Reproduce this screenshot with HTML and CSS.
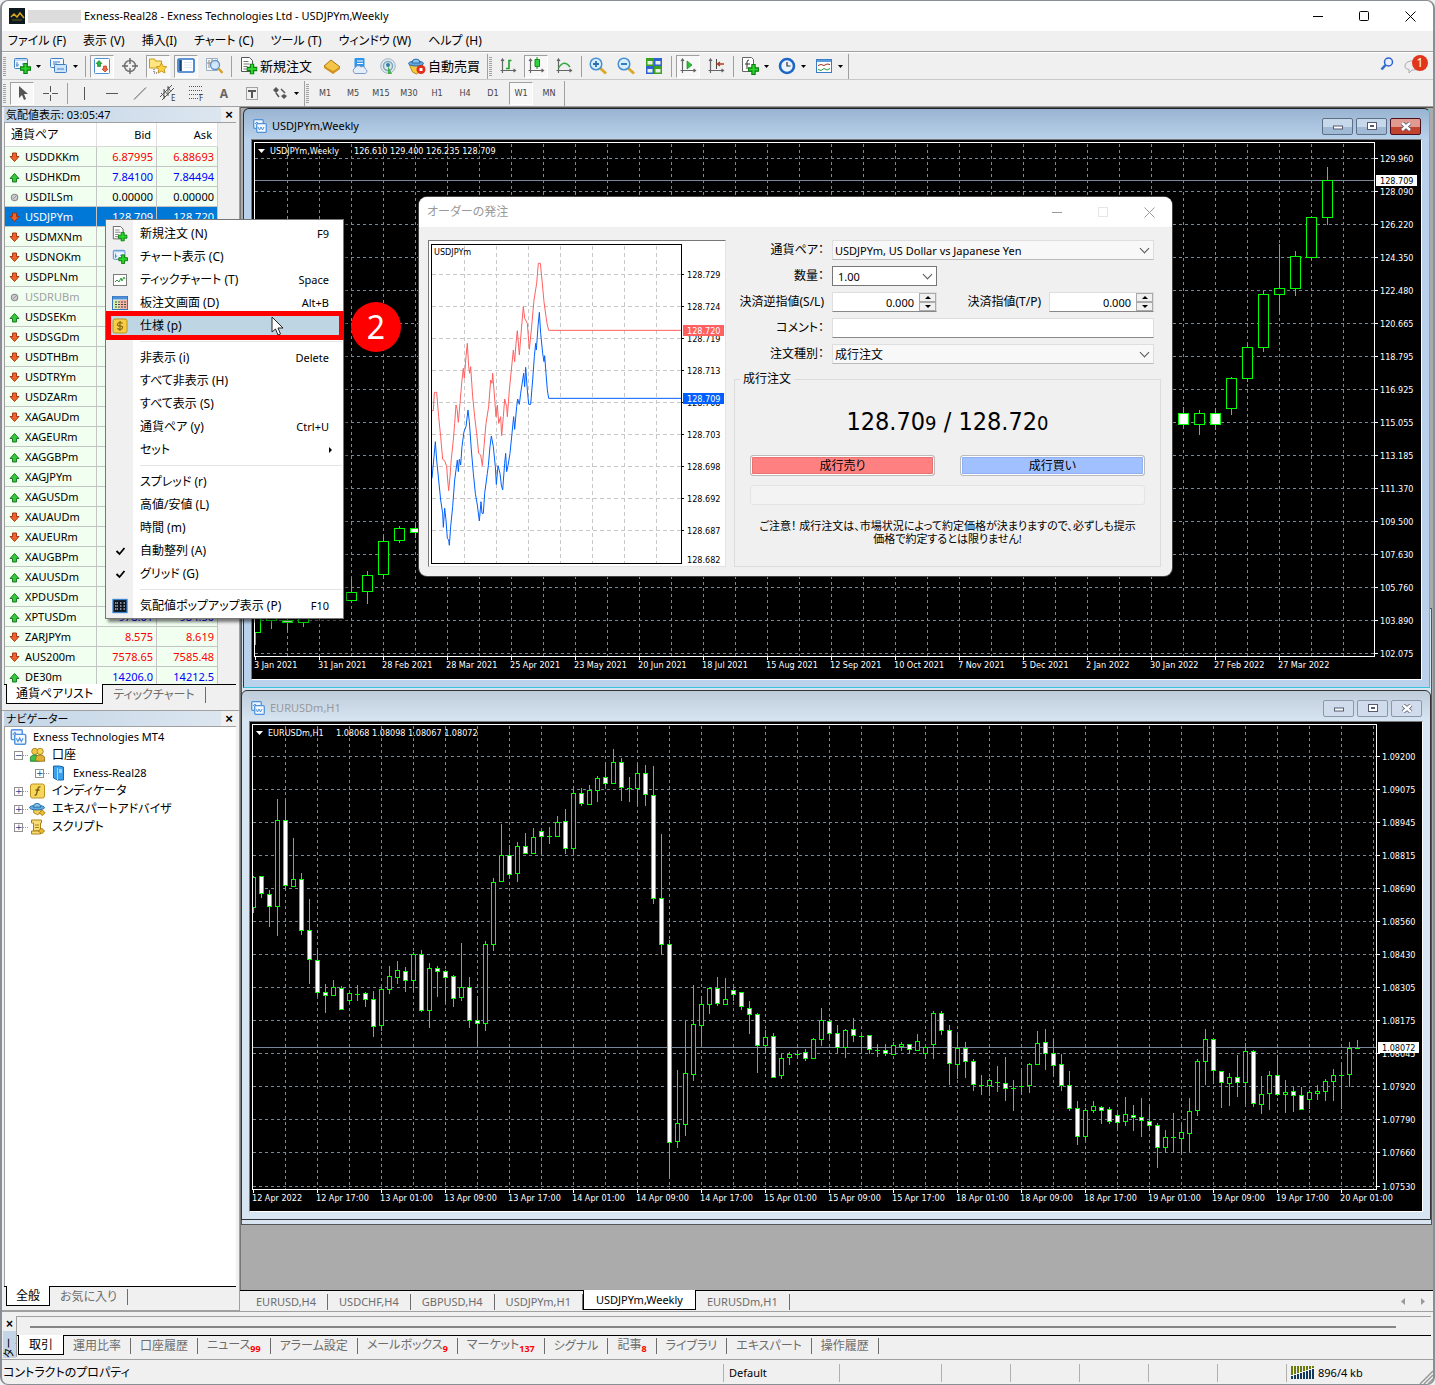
FILE: index.html
```html
<!DOCTYPE html>
<html lang="ja">
<head>
<meta charset="utf-8">
<meta name="viewport" content="width=device-width, initial-scale=1">
<title>Exness-Real28 - Exness Technologies Ltd - USDJPYm,Weekly</title>
<link rel="stylesheet" href="styles.css">
</head>
<body>
<svg class="sprite" aria-hidden="true">
  <symbol id="plus" viewBox="0 0 10 10"><path d="M3.500.5h3v3h3v3h-3v3h-3v-3h-3v-3h3z" fill="#2bd32b" stroke="#0a7d10"/></symbol>
  <symbol id="i-newchart" viewBox="0 0 18 18"><rect x="1.500" y="1.500" width="13" height="10" rx="1" fill="#eef6ff" stroke="#3f7fc4"/><path d="M2 3h12" stroke="#8cbcec"/><path d="M4 5v5M3 8h3M9 7h4" stroke="#4d86c4"/><use href="#plus" x="7" y="6" width="11" height="11"/></symbol>
  <symbol id="i-profiles" viewBox="0 0 18 18"><rect x=".5" y="1.500" width="13" height="9" rx="1" fill="#eef6ff" stroke="#3f7fc4"/><path d="M3 5h7M3 7h4" stroke="#3f7fc4"/><rect x="4.500" y="7.500" width="12" height="8" rx="1" fill="#cfe4fa" stroke="#3f7fc4"/><path d="M7 12h7" stroke="#3f7fc4"/></symbol>
  <symbol id="i-watch" viewBox="0 0 18 18"><rect x="1.500" y="1.500" width="15" height="15" rx="1" fill="#fff" stroke="#4a90d9"/><path d="M6 3.500l3 3H7.500v3h-3v-3H3z" fill="#26b33a" stroke="#0f7a20" stroke-width=".6"/><path d="M12 15l-3-3h1.500V9h3v3H15z" fill="#f26a3d" stroke="#b5260b" stroke-width=".6"/></symbol>
  <symbol id="i-target" viewBox="0 0 18 18"><circle cx="9" cy="9" r="5.500" fill="none" stroke="#777" stroke-width="1.500"/><path d="M9 1v6M9 11v6M1 9h6M11 9h6" stroke="#666" stroke-width="1.400"/></symbol>
  <symbol id="i-folderstar" viewBox="0 0 18 18"><path d="M.5 3V2h5l1 2h6v7H.5z" fill="#ffe680" stroke="#c69a18"/><path d="M5 12v4h3" fill="none" stroke="#444" stroke-dasharray="1 1"/><path d="M12.500 6l1.700 3.400 3.600.4-2.600 2.500.7 3.700-3.400-1.800L9.100 16l.7-3.700-2.600-2.500 3.600-.4z" fill="#ffd23e" stroke="#b98510" stroke-width=".8"/></symbol>
  <symbol id="i-terminal" viewBox="0 0 18 18"><rect x="1" y="2" width="16" height="13" rx="1" fill="#fff" stroke="#2b73c9" stroke-width="1.600"/><path d="M3.500 3v11" stroke="#17406f" stroke-width="2.600"/><path d="M7 5.500h8M7 8h8M7 10.500h8" stroke="#dfe8f2"/></symbol>
  <symbol id="i-tester" viewBox="0 0 18 18"><path d="M1.500 1.500h11v12h-11z" fill="#f4f8fc" stroke="#9bb0c6"/><path d="M4 3v8M7 2v9M2 6h9" stroke="#a08d76"/><circle cx="10" cy="8" r="4.500" fill="#cfe6fb" fill-opacity=".85" stroke="#5f93c4" stroke-width="1.300"/><path d="M13.500 11.500l4 4.500" stroke="#d99e20" stroke-width="2.400"/></symbol>
  <symbol id="i-order" viewBox="0 0 18 18"><path d="M1.500.5h8l3 3v11h-11z" fill="#fff" stroke="#555"/><path d="M3.500 4.500h5M3.500 7h6M3.500 9.500h4M3.500 12h4" stroke="#777"/><use href="#plus" x="6.500" y="6.500" width="11" height="11"/></symbol>
  <symbol id="i-book" viewBox="0 0 18 18"><path d="M1 9l7-6 9 7-7 6z" fill="#f5c548" stroke="#a8740f"/><path d="M1 9l9 5 7-4v2l-7 5-9-6z" fill="#d49320"/></symbol>
  <symbol id="i-cloud" viewBox="0 0 18 18"><rect x="3.500" y="1" width="10" height="10" rx="1" fill="#2f95e8"/><path d="M6 4h6M6 6.500h6" stroke="#fff" stroke-width="1.200"/><path d="M4 16.500a3 3 0 0 1 0-5.500 3.500 3.500 0 0 1 6-1 3 3 0 0 1 4.500 2 2.500 2.500 0 0 1 0 4.500z" fill="#e4eefa" stroke="#7d9cc4"/></symbol>
  <symbol id="i-signal" viewBox="0 0 18 18"><circle cx="9" cy="9" r="7.300" fill="#dfe7ee" stroke="#a3b5c4"/><circle cx="9" cy="9" r="4.500" fill="none" stroke="#79a7b9" stroke-width="1.400"/><circle cx="9" cy="8" r="2" fill="#2f7fa8"/><path d="M9 9l4 8H9z" fill="#46b04b"/></symbol>
  <symbol id="i-auto" viewBox="0 0 18 18"><path d="M1.500 8h13l-2 6-4 3-4-2z" fill="#f4c93f" stroke="#b58a18"/><ellipse cx="8" cy="6.500" rx="7.500" ry="2.500" fill="#62a8de" stroke="#2c6ca5"/><path d="M4 6a4 4 0 0 1 8 0z" fill="#8dc4ef" stroke="#2c6ca5"/><circle cx="13" cy="12.500" r="4.500" fill="#e2301e"/><path d="M11.500 11h3v3h-3z" fill="#fff"/></symbol>
  <symbol id="axes" viewBox="0 0 18 18"><path d="M3.500 2v14M1.500 13.500h15M2 4l1.500-2L5 4M14.500 12l2 1.500-2 1.500" fill="none" stroke="#666" stroke-width="1.200"/></symbol>
  <symbol id="i-bars" viewBox="0 0 18 18"><use href="#axes"/><path d="M7 11.500h3V3.500h2.500" fill="none" stroke="#1ea32b" stroke-width="1.600"/></symbol>
  <symbol id="i-candles" viewBox="0 0 18 18"><use href="#axes"/><path d="M10 0v12" stroke="#128a1e"/><path d="M8 2.500h4.500v7H8z" fill="#2fd33c" stroke="#128a1e"/></symbol>
  <symbol id="i-line" viewBox="0 0 18 18"><use href="#axes"/><path d="M3.500 11Q9 2 15 10" fill="none" stroke="#34a83e" stroke-width="1.400"/></symbol>
  <symbol id="lens" viewBox="0 0 18 18"><path d="M11 11l6 5.500" stroke="#d9a825" stroke-width="3"/><circle cx="7" cy="7" r="5.800" fill="#d6efff" stroke="#4a8fd0" stroke-width="1.500"/></symbol>
  <symbol id="i-zoomin" viewBox="0 0 18 18"><use href="#lens"/><path d="M4 7h6M7 4v6" stroke="#2b6fb0" stroke-width="1.800"/></symbol>
  <symbol id="i-zoomout" viewBox="0 0 18 18"><use href="#lens"/><path d="M4 7h6" stroke="#2b6fb0" stroke-width="1.800"/></symbol>
  <symbol id="i-tile" viewBox="0 0 18 18"><path d="M1 1h8v8H1zM9 9h8v8H9z" fill="#3aa21e"/><path d="M9 1h8v8H9zM1 9h8v8H1z" fill="#2d62d0"/><path d="M2.500 4h5v3.500h-5zM10.500 4h5v3.500h-5zM2.500 12h5v3.500h-5zM10.500 12h5v3.500h-5z" fill="#e8f2e4"/></symbol>
  <symbol id="i-scroll" viewBox="0 0 18 18"><use href="#axes"/><path d="M8 4l5 4-5 4z" fill="#2fbf3a" stroke="#128a1e" stroke-width=".7"/></symbol>
  <symbol id="i-shift" viewBox="0 0 18 18"><use href="#axes"/><path d="M9.500 2v10" stroke="#444"/><path d="M17 7h-6M13 5l-2.500 2L13 9" fill="none" stroke="#b33a1e" stroke-width="1.500"/></symbol>
  <symbol id="i-indic" viewBox="0 0 18 18"><path d="M1.500.5h9l2 2v12h-11z" fill="#fff" stroke="#666"/><path d="M8 3q-2 0-2 2v7M4 7h5" fill="none" stroke="#333"/><use href="#plus" x="7" y="7" width="11" height="11"/></symbol>
  <symbol id="i-clock" viewBox="0 0 18 18"><circle cx="9" cy="9" r="7" fill="#eaf4ff" stroke="#1f66c4" stroke-width="2.600"/><path d="M9 5v4h3.500" fill="none" stroke="#333" stroke-width="1.200"/></symbol>
  <symbol id="i-template" viewBox="0 0 18 18"><rect x="1.500" y="2.500" width="15" height="13" fill="#fff" stroke="#3b7cc2"/><path d="M2 4h14" stroke="#5d9be0" stroke-width="2"/><path d="M3 8.500l3-1 3 1 3-1.500 3 .5" fill="none" stroke="#a03020"/><path d="M3 12.500l3 1 3-2 3 1.500 3-1.500" fill="none" stroke="#2b9a3a"/></symbol>
  <symbol id="i-search" viewBox="0 0 14 14"><circle cx="8.500" cy="5" r="4" fill="#e8f0ff" stroke="#2f62d0" stroke-width="1.500"/><path d="M5.500 8L1.500 12.500" stroke="#2f6fc4" stroke-width="2.600"/></symbol>
  <symbol id="i-chart" viewBox="0 0 14 14"><rect x=".7" y=".7" width="9.600" height="8.600" rx="1" fill="#eaf3ff" stroke="#4f93dd" stroke-width="1.300"/><path d="M2 5l2-2 1 2" fill="none" stroke="#4f93dd"/><rect x="3.700" y="4.700" width="9.600" height="8.600" rx="1" fill="#f4f9ff" stroke="#4f93dd" stroke-width="1.300"/><path d="M5 8l1.500 3L8 8l1.500 3L11 8" fill="none" stroke="#4f93dd"/></symbol>
  <symbol id="i-down" viewBox="0 0 11 11"><path d="M3.500 1h4v3.500H10L5.500 9.500 1 4.500h2.500z" fill="#f0642c" stroke="#9c2c0c" stroke-width=".9"/></symbol>
  <symbol id="i-up" viewBox="0 0 11 11"><path d="M3.500 10h4V6.500H10L5.500 1.500 1 6.500h2.500z" fill="#35c93c" stroke="#11701a" stroke-width=".9"/></symbol>
  <symbol id="i-flat" viewBox="0 0 11 11"><circle cx="5.500" cy="5.500" r="3.200" fill="#ccc" stroke="#8a8a8a" stroke-width="1.100"/><path d="M4 7l3-3" stroke="#999"/></symbol>
  <symbol id="caret" viewBox="0 0 5 3"><path d="M0 0h5L2.500 3z"/></symbol>
  <symbol id="i-users" viewBox="0 0 18 18"><circle cx="6" cy="5" r="3.500" fill="#f2c848" stroke="#a77d14"/><path d="M1 16v-3q0-4 5-4t5 4v3z" fill="#3fc04a" stroke="#1b7c26"/><circle cx="12" cy="5" r="3.500" fill="#f7d65a" stroke="#a77d14"/><path d="M7 15v-2q0-4 5-4t5 4v3H9z" fill="#e0b036" stroke="#967010"/></symbol>
  <symbol id="i-server" viewBox="0 0 14 16"><path d="M2 1h6l4 1v13H6l-4-2z" fill="#3ba1ee" stroke="#1768ad"/><path d="M6 3v12" stroke="#9ad4ff"/><path d="M7.500 5h3M7.500 7h3" stroke="#fff"/></symbol>
  <symbol id="i-func" viewBox="0 0 16 16"><rect x="1" y="1" width="14" height="14" rx="2" fill="#f6d75b" stroke="#bd9320"/><path d="M11 4q-2-.6-2.500 1.500L7 11q-.5 1.500-2 1M6 7h4" fill="none" stroke="#7a5a0c" stroke-width="1.300"/></symbol>
  <symbol id="i-hat" viewBox="0 0 18 16"><path d="M5 8h8v4l-4 2-4-2z" fill="#f3cf58" stroke="#ad8314"/><ellipse cx="8.500" cy="6.500" rx="8" ry="2.500" fill="#5fabdf" stroke="#2c70a5"/><path d="M4.500 6a4 4 0 0 1 8 0z" fill="#85c4ee" stroke="#2c70a5"/><path d="M14 9l3 3-3 3-3-3z" fill="#edb92f" stroke="#a1780c"/></symbol>
  <symbol id="i-script" viewBox="0 0 16 16"><path d="M2 1h10v3h-1v8h-7V4H2z" fill="#f6dd7a" stroke="#ad8314"/><path d="M2 12h9v3H2zM5.500 6h4M5.500 8.500h4" fill="#f6dd7a" stroke="#ad8314"/><path d="M12 9l3 3-3 3-3-3z" fill="#edb92f" stroke="#a1780c"/></symbol>
  <symbol id="i-tick" viewBox="0 0 16 16"><rect x="1.500" y="2.500" width="13" height="11" fill="#fff" stroke="#7d7d7d"/><path d="M3 10l2-2 2 2 2-4 1 3 2-4 1 2" fill="none" stroke="#2a9b36"/></symbol>
  <symbol id="i-depth" viewBox="0 0 16 16"><rect x=".5" y="1.500" width="15" height="13" fill="#fff" stroke="#3474b8"/><path d="M1 3h14" stroke="#4d8ed8" stroke-width="3"/><path d="M1 5h7v9H1z" fill="#d9efa8"/><path d="M8 5h7v9H8z" fill="#f7b6a8"/><path d="M3 7h11M3 9.500h11M3 12h11" stroke="#444" stroke-dasharray="2 1"/></symbol>
  <symbol id="i-spec" viewBox="0 0 16 16"><rect x="1" y="1" width="14" height="14" rx="2" fill="#f6cf45" stroke="#c0921c"/><path d="M10.500 5.500Q10 4.500 8 4.500T5.500 6.200 8 8t2.500 1.800T8 11.500 5.500 10.300M8 3v10" fill="none" stroke="#8a6410" stroke-width="1.200"/></symbol>
  <symbol id="i-popup" viewBox="0 0 16 16"><rect x="1" y="1.500" width="14" height="13" fill="#0c1420" stroke="#3a83cf" stroke-width="1.300"/><path d="M3 5h3M3 8h3M3 11h3M8 5h2M8 8h2M8 11h2M11.500 5h2M11.500 8h2M11.500 11h2" stroke="#fff" stroke-dasharray="1.500 .5"/></symbol>
  <symbol id="i-check" viewBox="0 0 16 16"><path d="M4.500 8l3 3 5-6" fill="none" stroke="#000" stroke-width="1.800"/></symbol>
</svg>

<div class="app">
  <header class="titlebar">
    <svg class="logo" viewBox="0 0 16 16"><rect width="16" height="16" fill="#0c1a20"/><path d="M2 9l3-3 3 3 3-4 4 5" fill="none" stroke="#d8a51c" stroke-width="1.500"/><path d="M3 12h10" stroke="#6f5a1c"/></svg>
    <span class="mask"></span>
    <h1>Exness-Real28 - Exness Technologies Ltd - USDJPYm,Weekly</h1>
    <div class="win-ctl">
      <button aria-label="最小化"><svg viewBox="0 0 11 11"><path d="M0 5.500h10"/></svg></button>
      <button aria-label="最大化"><svg viewBox="0 0 11 11"><rect x=".5" y=".5" width="9" height="9" rx="1"/></svg></button>
      <button aria-label="閉じる"><svg viewBox="0 0 11 11"><path d="M.5.5l10 10M10.500.5l-10 10"/></svg></button>
    </div>
  </header>

  <nav class="menubar">
    <button>ファイル (F)</button><button>表示 (V)</button><button>挿入(I)</button><button>チャート (C)</button><button>ツール (T)</button><button>ウィンドウ (W)</button><button>ヘルプ (H)</button>
  </nav>

  <div class="toolbar">
    <i class="grip"></i>
    <button class="tb drop" aria-label="新規チャート"><svg class="ic"><use href="#i-newchart"/></svg><svg class="car"><use href="#caret"/></svg></button>
    <button class="tb drop" aria-label="プロファイル"><svg class="ic"><use href="#i-profiles"/></svg><svg class="car"><use href="#caret"/></svg></button>
    <i class="sep"></i>
    <button class="tb on" aria-label="気配値表示"><svg class="ic"><use href="#i-watch"/></svg></button>
    <button class="tb" aria-label="データウィンドウ"><svg class="ic"><use href="#i-target"/></svg></button>
    <button class="tb on" aria-label="ナビゲーター"><svg class="ic"><use href="#i-folderstar"/></svg></button>
    <button class="tb on" aria-label="ターミナル"><svg class="ic"><use href="#i-terminal"/></svg></button>
    <button class="tb" aria-label="ストラテジーテスター"><svg class="ic"><use href="#i-tester"/></svg></button>
    <i class="sep"></i>
    <button class="tb wide"><svg class="ic"><use href="#i-order"/></svg>新規注文</button>
    <button class="tb" aria-label="MetaEditor"><svg class="ic"><use href="#i-book"/></svg></button>
    <button class="tb" aria-label="VPS"><svg class="ic"><use href="#i-cloud"/></svg></button>
    <button class="tb" aria-label="シグナル"><svg class="ic"><use href="#i-signal"/></svg></button>
    <button class="tb wide"><svg class="ic"><use href="#i-auto"/></svg>自動売買</button>
    <i class="edge"></i><i class="grip"></i>
    <button class="tb" aria-label="バーチャート"><svg class="ic"><use href="#i-bars"/></svg></button>
    <button class="tb on" aria-label="ローソク足"><svg class="ic"><use href="#i-candles"/></svg></button>
    <button class="tb" aria-label="ラインチャート"><svg class="ic"><use href="#i-line"/></svg></button>
    <i class="sep"></i>
    <button class="tb" aria-label="拡大"><svg class="ic"><use href="#i-zoomin"/></svg></button>
    <button class="tb" aria-label="縮小"><svg class="ic"><use href="#i-zoomout"/></svg></button>
    <button class="tb" aria-label="整列"><svg class="ic"><use href="#i-tile"/></svg></button>
    <i class="sep"></i>
    <button class="tb on" aria-label="自動スクロール"><svg class="ic"><use href="#i-scroll"/></svg></button>
    <button class="tb" aria-label="チャートシフト"><svg class="ic"><use href="#i-shift"/></svg></button>
    <i class="sep"></i>
    <button class="tb drop" aria-label="インディケータ"><svg class="ic"><use href="#i-indic"/></svg><svg class="car"><use href="#caret"/></svg></button>
    <button class="tb drop" aria-label="時間足"><svg class="ic"><use href="#i-clock"/></svg><svg class="car"><use href="#caret"/></svg></button>
    <button class="tb drop" aria-label="定型チャート"><svg class="ic"><use href="#i-template"/></svg><svg class="car"><use href="#caret"/></svg></button>
    <i class="edge"></i>
    <div class="alerts">
      <button aria-label="検索"><svg width="14" height="14"><use href="#i-search"/></svg></button>
      <button class="chat" aria-label="通知"><svg width="16" height="14" viewBox="0 0 16 14"><path d="M8 1c4 0 7 2 7 5s-3 4-7 4l-3 3V9.500C2 9 1 8 1 6c0-3 3-5 7-5z" fill="#eee" stroke="#aaa"/></svg><b>1</b></button>
    </div>
  </div>

  <div class="toolbar tools">
    <i class="grip"></i>
    <button class="tb on" aria-label="カーソル"><svg class="ic" viewBox="0 0 18 18"><path d="M6 2v12l3-3 2 5 2-1-2-5h4z" fill="#555"/></svg></button>
    <button class="tb" aria-label="十字カーソル"><svg class="ic" viewBox="0 0 18 18"><path d="M9.500 2v6M9.500 11v6M2 9.500h6M11 9.500h6" stroke="#555"/></svg></button>
    <i class="sep"></i>
    <button class="tb" aria-label="垂直線"><svg class="ic" viewBox="0 0 18 18"><path d="M9.500 3v13" stroke="#555"/></svg></button>
    <button class="tb" aria-label="水平線"><svg class="ic" viewBox="0 0 18 18"><path d="M3 9.500h12" stroke="#555"/></svg></button>
    <button class="tb" aria-label="トレンドライン"><svg class="ic" viewBox="0 0 18 18"><path d="M3 15.500L15 3.500" stroke="#555"/></svg></button>
    <button class="tb" aria-label="チャネル"><svg class="ic" viewBox="0 0 18 18"><path d="M1 13L13 1M3 16L15 4M2 9l4 4M5 6l4 5M9 3l3 5M5 5v10M9 2v10" fill="none" stroke="#555"/><text x="12" y="17" class="mini">E</text></svg></button>
    <button class="tb" aria-label="フィボナッチ"><svg class="ic" viewBox="0 0 18 18"><path d="M2 2.500h14M2 6.500h14M2 10.500h14M2 14.500h9" stroke="#555" stroke-dasharray="1 1"/><text x="12" y="17" class="mini">F</text></svg></button>
    <button class="tb glyph" aria-label="テキスト"><span>A</span></button>
    <button class="tb" aria-label="テキストラベル"><svg class="ic" viewBox="0 0 18 18"><rect x="3.500" y="3.500" width="11" height="12" fill="none" stroke="#555" stroke-dasharray="1 1"/><path d="M5 7h8M9 7v7" stroke="#555" stroke-width="2"/></svg></button>
    <button class="tb drop" aria-label="矢印"><svg class="ic" viewBox="0 0 18 18"><path d="M2 6l3-3 3 3-3 3zM10 12l3-2 3 2-3 3z" fill="#555"/><path d="M5 9l3 4M10 5l4 4" stroke="#555" stroke-width="1.500"/></svg><svg class="car"><use href="#caret"/></svg></button>
    <i class="edge"></i><i class="grip"></i>
    <button class="tb tf">M1</button><button class="tb tf">M5</button><button class="tb tf">M15</button><button class="tb tf">M30</button><button class="tb tf">H1</button><button class="tb tf">H4</button><button class="tb tf">D1</button><button class="tb tf on">W1</button><button class="tb tf">MN</button>
    <i class="edge"></i>
  </div>

  <div class="main">
    <aside class="side">
      <section class="panel watch">
        <header class="dock-title"><h2>気配値表示: 03:05:47</h2><button aria-label="閉じる">×</button></header>
        <div class="watch-body">
          <table>
            <thead><tr><th>通貨ペア</th><th>Bid</th><th>Ask</th></tr></thead>
            <tbody>
              <tr class="dn"><td><svg><use href="#i-down"/></svg>USDDKKm</td><td>6.87995</td><td>6.88693</td></tr>
              <tr class="up"><td><svg><use href="#i-up"/></svg>USDHKDm</td><td>7.84100</td><td>7.84494</td></tr>
              <tr><td><svg><use href="#i-flat"/></svg>USDILSm</td><td>0.00000</td><td>0.00000</td></tr>
              <tr class="sel"><td><svg><use href="#i-down"/></svg>USDJPYm</td><td>128.709</td><td>128.720</td></tr>
              <tr class="dn"><td><svg><use href="#i-down"/></svg>USDMXNm</td><td></td><td></td></tr>
              <tr class="dn"><td><svg><use href="#i-down"/></svg>USDNOKm</td><td></td><td></td></tr>
              <tr class="dn"><td><svg><use href="#i-down"/></svg>USDPLNm</td><td></td><td></td></tr>
              <tr class="off"><td><svg><use href="#i-flat"/></svg>USDRUBm</td><td></td><td></td></tr>
              <tr class="up"><td><svg><use href="#i-up"/></svg>USDSEKm</td><td></td><td></td></tr>
              <tr class="dn"><td><svg><use href="#i-down"/></svg>USDSGDm</td><td></td><td></td></tr>
              <tr class="dn"><td><svg><use href="#i-down"/></svg>USDTHBm</td><td></td><td></td></tr>
              <tr class="dn"><td><svg><use href="#i-down"/></svg>USDTRYm</td><td></td><td></td></tr>
              <tr class="dn"><td><svg><use href="#i-down"/></svg>USDZARm</td><td></td><td></td></tr>
              <tr class="dn"><td><svg><use href="#i-down"/></svg>XAGAUDm</td><td></td><td></td></tr>
              <tr class="up"><td><svg><use href="#i-up"/></svg>XAGEURm</td><td></td><td></td></tr>
              <tr class="up"><td><svg><use href="#i-up"/></svg>XAGGBPm</td><td></td><td></td></tr>
              <tr class="up"><td><svg><use href="#i-up"/></svg>XAGJPYm</td><td></td><td></td></tr>
              <tr class="up"><td><svg><use href="#i-up"/></svg>XAGUSDm</td><td></td><td></td></tr>
              <tr class="dn"><td><svg><use href="#i-down"/></svg>XAUAUDm</td><td></td><td></td></tr>
              <tr class="dn"><td><svg><use href="#i-down"/></svg>XAUEURm</td><td></td><td></td></tr>
              <tr class="up"><td><svg><use href="#i-up"/></svg>XAUGBPm</td><td></td><td></td></tr>
              <tr class="up"><td><svg><use href="#i-up"/></svg>XAUUSDm</td><td></td><td></td></tr>
              <tr class="up"><td><svg><use href="#i-up"/></svg>XPDUSDm</td><td></td><td></td></tr>
              <tr class="up"><td><svg><use href="#i-up"/></svg>XPTUSDm</td><td>978.01</td><td>984.50</td></tr>
              <tr class="dn"><td><svg><use href="#i-down"/></svg>ZARJPYm</td><td>8.575</td><td>8.619</td></tr>
              <tr class="dn"><td><svg><use href="#i-down"/></svg>AUS200m</td><td>7578.65</td><td>7585.48</td></tr>
              <tr class="up"><td><svg><use href="#i-up"/></svg>DE30m</td><td>14206.0</td><td>14212.5</td></tr>
            </tbody>
          </table>
        </div>
        <div class="tabs"><button class="tab cur">通貨ペアリスト</button><button class="tab">ティックチャート</button></div>
      </section>

      <section class="panel nav">
        <header class="dock-title"><h2>ナビゲーター</h2><button aria-label="閉じる">×</button></header>
        <ul class="tree">
          <li class="root"><svg><use href="#i-chart"/></svg>Exness Technologies MT4</li>
          <li class="node jp"><i class="box">−</i><svg><use href="#i-users"/></svg>口座</li>
          <li class="node leaf"><i class="box">+</i><svg><use href="#i-server"/></svg>Exness-Real28</li>
          <li class="node jp"><i class="box">+</i><svg><use href="#i-func"/></svg>インディケータ</li>
          <li class="node jp"><i class="box">+</i><svg><use href="#i-hat"/></svg>エキスパートアドバイザ</li>
          <li class="node jp"><i class="box">+</i><svg><use href="#i-script"/></svg>スクリプト</li>
        </ul>
        <div class="tabs"><button class="tab cur">全般</button><button class="tab">お気に入り</button></div>
      </section>
    </aside>

    <main class="work">
      <div class="desktop">
        <div class="under"></div>
        <section class="mdi front">
          <header><svg class="wi"><use href="#i-chart"/></svg><h2>USDJPYm,Weekly</h2>
            <div class="mc"><button aria-label="最小化"><svg viewBox="0 0 12 8"><rect x="1.500" y="3.500" width="9" height="3" fill="#fff" stroke="#555a70"/></svg></button><button aria-label="元に戻す"><svg viewBox="0 0 12 9"><rect x="1.500" y=".5" width="9" height="7" fill="#fff" stroke="#555a70"/><rect x="4.500" y="3.500" width="3" height="1" fill="#555a70" stroke="#555a70"/></svg></button><button class="x" aria-label="閉じる"><svg viewBox="0 0 12 9"><path d="M2 1l8 7M10 1L2 8" stroke="#555a70" stroke-width="4"/><path d="M2 1l8 7M10 1L2 8" stroke="#fff" stroke-width="2.400"/></svg></button></div>
          </header>
          <div class="client"><svg id="usdjpy" class="chart"></svg></div>
        </section>
        <section class="mdi back">
          <header><svg class="wi"><use href="#i-chart"/></svg><h2>EURUSDm,H1</h2>
            <div class="mc"><button aria-label="最小化"><svg viewBox="0 0 12 8"><rect x="1.500" y="3.500" width="9" height="3" fill="#fff" stroke="#555a70"/></svg></button><button aria-label="元に戻す"><svg viewBox="0 0 12 9"><rect x="1.500" y=".5" width="9" height="7" fill="#fff" stroke="#555a70"/><rect x="4.500" y="3.500" width="3" height="1" fill="#555a70" stroke="#555a70"/></svg></button><button aria-label="閉じる"><svg viewBox="0 0 12 9"><path d="M2 1l8 7M10 1L2 8" stroke="#555a70" stroke-width="4"/><path d="M2 1l8 7M10 1L2 8" stroke="#fff" stroke-width="2.400"/></svg></button></div>
          </header>
          <div class="client"><svg id="eurusd" class="chart"></svg></div>
        </section>
      </div>
      <div class="tabs charts">
        <button class="tab">EURUSD,H4</button><button class="tab">USDCHF,H4</button><button class="tab">GBPUSD,H4</button><button class="tab">USDJPYm,H1</button><button class="tab cur">USDJPYm,Weekly</button><button class="tab">EURUSDm,H1</button>
        <span class="scroll"><button aria-label="前へ"><svg width="4" height="7"><path d="M4 0v7L0 3.500z"/></svg></button><button aria-label="次へ"><svg width="4" height="7"><path d="M0 0v7l4-3.500z"/></svg></button></span>
      </div>
    </main>
  </div>

  <section class="terminal">
    <div class="strip"><button aria-label="閉じる">×</button><span><b>ターミナル</b></span></div>
    <div class="term-body">
      <div class="track"></div>
      <div class="tabs term-tabs">
        <button class="tab cur">取引</button><button class="tab">運用比率</button><button class="tab">口座履歴</button><button class="tab">ニュース<sub>99</sub></button><button class="tab">アラーム設定</button><button class="tab">メールボックス<sub>9</sub></button><button class="tab">マーケット<sub>137</sub></button><button class="tab">シグナル</button><button class="tab">記事<sub>8</sub></button><button class="tab">ライブラリ</button><button class="tab">エキスパート</button><button class="tab">操作履歴</button>
      </div>
    </div>
  </section>

  <footer class="status">
    <span class="jp">コントラクトのプロパティ</span><span>Default</span><span></span><span></span><span></span><span></span><span></span><span></span>
    <span class="net"><svg width="24" height="13" viewBox="0 0 24 13"><path d="M1 0v9M4 0v8M7 0v7M10 0v6M13 0v5M16 0v4M19 0v3M22 0v2" stroke="#6b7a0c" stroke-width="2"/><path d="M1 10v3M4 9v4M7 8v5M10 7v6M13 6v7M16 5v8M19 4v9M22 3v10" stroke="#123c5e" stroke-width="2"/></svg>896/4 kb</span>
    <svg class="size" viewBox="0 0 14 14"><path d="M1 14L14 1M5 14l9-9M9 14l5-5" stroke="#999" stroke-width="1.500"/></svg>
  </footer>
</div>

<section class="dialog" role="dialog" aria-labelledby="dlg">
  <header><h2 id="dlg">オーダーの発注</h2>
    <div class="win-ctl dim">
      <button aria-label="最小化"><svg viewBox="0 0 11 11"><path d="M0 5.500h10"/></svg></button>
      <button aria-label="最大化" disabled><svg viewBox="0 0 11 11"><rect x=".5" y=".5" width="9" height="9"/></svg></button>
      <button aria-label="閉じる"><svg viewBox="0 0 11 11"><path d="M.5.5l10 10M10.500.5l-10 10"/></svg></button>
    </div>
  </header>
  <div class="dlg-body">
    <div class="tickbox"><svg id="ticks" class="chart"></svg></div>
    <form class="order">
      <div class="grid">
        <label for="sym">通貨ペア：</label><span class="pick full"><select id="sym"><option>USDJPYm, US Dollar vs Japanese Yen</option></select></span>
        <label for="vol">数量：</label><span class="pick combo"><input id="vol" value="1.00"></span>
        <label for="sl">決済逆指値(S/L)</label><span class="spin"><input id="sl" value="0.000"><span><button type="button" aria-label="上へ"></button><button type="button" class="d" aria-label="下へ"></button></span></span>
        <label for="tp">決済指値(T/P)</label><span class="spin"><input id="tp" value="0.000"><span><button type="button" aria-label="上へ"></button><button type="button" class="d" aria-label="下へ"></button></span></span>
        <label for="com">コメント：</label><input id="com" class="full field">
        <label for="type">注文種別：</label><span class="pick full"><select id="type" class="jp"><option>成行注文</option></select></span>
      </div>
      <fieldset>
        <legend>成行注文</legend>
        <p class="quote">128.70<small>9</small> / 128.72<small>0</small></p>
        <div class="pair"><button type="button" class="sell">成行売り</button><button type="button" class="buy">成行買い</button></div>
        <div class="ghost"></div>
        <p class="note">ご注意！ 成行注文は、市場状況によって約定価格が決まりますので、必ずしも提示<br>価格で約定するとは限りません!</p>
      </fieldset>
    </form>
  </div>
</section>

<ul class="ctx">
  <li><button><svg><use href="#i-order"/></svg><span>新規注文 (N)</span><kbd>F9</kbd></button></li>
  <li><button><svg><use href="#i-newchart"/></svg><span>チャート表示 (C)</span></button></li>
  <li><button><svg><use href="#i-tick"/></svg><span>ティックチャート (T)</span><kbd>Space</kbd></button></li>
  <li><button><svg><use href="#i-depth"/></svg><span>板注文画面 (D)</span><kbd>Alt+B</kbd></button></li>
  <li><button class="hot"><svg><use href="#i-spec"/></svg><span>仕様 (p)</span></button></li>
  <li class="rule"></li>
  <li><button><span>非表示 (i)</span><kbd>Delete</kbd></button></li>
  <li><button><span>すべて非表示 (H)</span></button></li>
  <li><button><span>すべて表示 (S)</span></button></li>
  <li><button><span>通貨ペア (y)</span><kbd>Ctrl+U</kbd></button></li>
  <li><button class="sub"><span>セット</span></button></li>
  <li class="rule"></li>
  <li><button><span>スプレッド (r)</span></button></li>
  <li><button><span>高値/安値 (L)</span></button></li>
  <li><button><span>時間 (m)</span></button></li>
  <li><button><svg><use href="#i-check"/></svg><span>自動整列 (A)</span></button></li>
  <li><button><svg><use href="#i-check"/></svg><span>グリッド (G)</span></button></li>
  <li class="rule"></li>
  <li><button><svg><use href="#i-popup"/></svg><span>気配値ポップアップ表示 (P)</span><kbd>F10</kbd></button></li>
</ul>
<div class="mark"></div>
<div class="step">2</div>
<svg class="pointer" viewBox="0 0 13 20"><path d="M1 1v15l3.500-3 2.500 6 2.500-1-2.500-6h5z" fill="#fff" stroke="#222"/></svg>
<script src="script.js"></script>
</body>
</html>
```
FILE: styles.css
```css
* { box-sizing: border-box; }
body {
  margin: 0;
  background: #f0f0f0;
  color: #000;
  font: 11px/16px "Noto Sans", "Noto Sans CJK JP", sans-serif;
  font-feature-settings: "palt";
}
button, input, select { font: inherit; font-feature-settings: inherit; color: inherit; }
button { background: none; border: 0; padding: 0; margin: 0; white-space: nowrap; }
h1, h2, p, ul { margin: 0; padding: 0; font: inherit; }
ul { list-style: none; }
.sprite { position: absolute; width: 0; height: 0; }
.jp { font-size: 12px; }

.app {
  display: flex; flex-direction: column; min-height: 100vh;
  border: 1px solid #8a8f96; border-width: 1px 2px 1px 2px; border-radius: 8px;
}

/* caption and menu */
.titlebar { display: flex; align-items: center; height: 30px; background: #fff; padding-left: 7px; border-radius: 8px 8px 0 0; }
.logo { width: 16px; height: 16px; }
.mask { width: 53px; height: 13px; margin: 0 3px; background: #dcdcdc; }
.titlebar h1 { flex: 1; font-size: 11px; }
.win-ctl { display: flex; }
.win-ctl button { width: 46px; height: 30px; display: grid; place-items: center; }
.win-ctl svg { width: 11px; height: 11px; fill: none; stroke: #000; }
.menubar { display: flex; gap: 17px; height: 21px; padding-left: 6px; border-bottom: 1px solid #a0a0a0; font-size: 12px; }

/* toolbars */
.toolbar { display: flex; align-items: center; height: 27px; border-top: 1px solid #fff; }
.tools { height: 28px; border-bottom: 1px solid #a0a0a0; border-top: 1px solid #c8c8c8; }
.grip { width: 3px; height: 19px; margin: 0 2px 0 1px; background: repeating-linear-gradient(#a0a0a0 0 1px, #f0f0f0 1px 2px); }
.tb { width: 24px; height: 23px; margin: 0 2px; display: flex; align-items: center; justify-content: center; flex: none; }
.tb.on { border: 1px solid; border-color: #a0a0a0 #fff #fff #a0a0a0; background: #f8f8f8; }
.tb.drop { width: 33px; gap: 5px; }
.tb.wide { width: 80px; font-size: 13px; gap: 2px; }
.ic { width: 18px; height: 18px; }
.car { width: 5px; height: 3px; }
.sep { width: 1px; height: 21px; margin: 0 2px 0 3px; background: #a0a0a0; }
.edge { width: 1px; height: 25px; background: #a0a0a0; margin-left: 1px; }
.alerts { margin-left: auto; display: flex; align-items: center; gap: 10px; padding-right: 5px; }
.chat { position: relative; width: 24px; height: 20px; text-align: left; padding-top: 4px; }
.chat b { position: absolute; right: 0; top: -1px; width: 16px; height: 16px; border-radius: 50%; background: #e0361c; color: #fff; font-weight: 400; font-size: 12px; line-height: 16px; text-align: center; }
.tf { font-size: 9px; font-family: "DejaVu Sans Condensed", "DejaVu Sans", sans-serif; color: #444; }
.mini { font: 8px "Noto Sans", sans-serif; fill: #333; }
.glyph { font: bold 12px "Noto Sans", sans-serif; color: #666; }

/* main split */
.main { display: flex; flex: 1; min-height: 0; }
.side { width: 238px; flex: none; display: flex; flex-direction: column; }
.panel { display: flex; flex-direction: column; padding: 0 2px 4px; border-right: 1px solid #a0a0a0; border-bottom: 1px solid #a0a0a0; }
.watch { height: 604px; }
.nav { flex: 1; }
.dock-title { display: flex; height: 15px; line-height: 15px; flex: none; }
.dock-title h2 { width: 217px; padding-left: 2px; font-size: 11px; background: linear-gradient(90deg, #c3d5e6, #dce6f0); }
.dock-title button { flex: 1; font: bold 13px/15px "Liberation Sans", sans-serif; }
.watch-body { height: 562px; flex: none; overflow: hidden; border: 1px solid #a0a0a0; border-width: 1px 0 0 1px; margin-right: 1px; }
.watch table { width: 213px; border-collapse: separate; border-spacing: 0; table-layout: fixed; }
.watch th { height: 24px; padding: 0 5px; background: #fff; font-weight: 400; text-align: right; border-right: 1px solid #e0e0e0; border-bottom: 1px solid #d8d8d8; }
.watch th:first-child { text-align: left; width: 92px; font-size: 12px; padding-left: 6px; }
.watch th:nth-child(2) { width: 60px; }
.watch td { height: 20px; padding: 0 3px; background: #f0fff0; border-right: 1px solid #c4c4c4; border-bottom: 1px solid #c4c4c4; text-align: right; line-height: 16px; white-space: nowrap; }
.watch td:first-child { text-align: left; padding-left: 4px; }
.watch td svg { width: 11px; height: 11px; margin-right: 5px; vertical-align: -2px; }
.dn td + td { color: #f00; }
.up td + td { color: #00f; }
.watch .sel td { background: #0078d7; color: #fff; }
.watch .off td { color: #a0a0a0; }
.tree { flex: 1; background: #fff; border: 1px solid #a0a0a0; border-width: 1px 0 0 1px; padding-top: 1px; margin-right: 1px; }
.tree li { height: 18px; display: flex; align-items: center; }
.tree svg { width: 17px; height: 16px; margin-right: 6px; }
.tree .root { padding-left: 5px; }
.tree .node { padding-left: 9px; }
.tree .leaf { padding-left: 30px; }
.box { width: 9px; height: 9px; margin-right: 6px; border: 1px solid #909090; color: #1c3f94; font: 9px/7px "DejaVu Sans", sans-serif; text-align: center; position: relative; }
.box::after { content: ""; position: absolute; left: 8px; top: 3px; width: 5px; border-top: 1px dotted #999; }

/* tab strips */
.tabs { display: flex; height: 20px; border-top: 1px solid #000; padding-left: 2px; margin-right: 1px; font-size: 12px; flex: none; }
.tab { color: #6d6d6d; height: 16px; padding: 0 10px; border-right: 1px solid #6d6d6d; margin-top: 2px; line-height: 14px; }
.tab.cur { color: #000; background: #fff; height: 20px; margin-top: -1px; border: 1px solid #000; border-top: 0; line-height: 18px; padding: 0 9px; }
.tab sub { color: #f00; font: bold 9px/9px "Noto Sans", sans-serif; }

/* MDI area */
.work { flex: 1; min-width: 0; display: flex; flex-direction: column; }
.desktop { flex: 1; position: relative; background: #ababab; min-height: 1120px; border-left: 1px solid #777; border-top: 1px solid #555; }
.under { position: absolute; left: 0; right: 1px; top: 500px; height: 617px; background: #d7e4f2; border: 1px solid #555; }
.mdi { position: absolute; display: flex; flex-direction: column; border: 1px solid #333; border-radius: 6px 6px 0 0; padding: 0 7px 7px; }
.front { left: 2px; right: 3px; top: 0; height: 580px; background: linear-gradient(#99b4d1, #b9d1ea 30px); border-color: #222 #38c4dc #38c4dc #333; z-index: 2; }
.back { left: 0; right: 2px; top: 582px; height: 530px; background: linear-gradient(#bfcddb, #d7e4f2 30px); }
.mdi header { display: flex; align-items: center; height: 30px; padding: 4px 1px 0; flex: none; }
.wi { width: 14px; height: 14px; margin: 0 5px 0 1px; }
.mdi h2 { flex: 1; }
.back h2 { color: #999; }
.mc { display: flex; gap: 3px; }
.mc button { width: 31px; height: 17px; display: grid; place-items: center; border: 1px solid #5d6f86; border-radius: 2px; background: linear-gradient(#c7d8ea 50%, #a0b9d4 50%); }
.back .mc button { border-color: #8b98a8; background: #d0dceb; }
.mc .x { border-color: #4b1020; background: linear-gradient(#e09a90 50%, #c0432e 50%); }
.mc svg { width: 12px; height: 9px; }
.client { flex: 1; min-height: 0; background: #000; border: 1px solid; border-color: #777 #fff #fff #777; }
.chart { display: block; width: 100%; height: 100%; font: 9px "DejaVu Sans Condensed", "DejaVu Sans", sans-serif; }
.charts { height: 21px; padding-left: 5px; font-size: 11px; margin: 0; }
.charts .tab { padding: 0 11px; margin-top: 3px; }
.charts .tab.cur { margin-top: -1px; padding: 0 12px; line-height: 20px; }
.scroll { margin-left: auto; display: flex; gap: 16px; align-items: center; padding-right: 8px; }
.scroll svg { fill: #999; display: block; }

/* terminal */
.terminal { display: flex; height: 49px; border-top: 1px solid #a0a0a0; border-bottom: 1px solid #a0a0a0; }
.strip { width: 14px; padding: 4px 0 0 1px; display: flex; flex-direction: column; }
.strip button { font: bold 12px/12px "Liberation Sans", sans-serif; height: 15px; }
.strip span { height: 27px; overflow: hidden; background: #c3d5e6; display: flex; align-items: flex-end; }
.strip b { font-weight: 400; line-height: 12px; writing-mode: vertical-rl; text-orientation: sideways; transform: rotate(180deg); }
.term-body { flex: 1; border: 1px solid #a0a0a0; border-width: 1px 0 0 1px; margin: 4px 2px 2px 0; display: flex; flex-direction: column; justify-content: space-between; }
.track { height: 2px; background: #858585; margin: 9px 35px 0 13px; }
.term-tabs { height: 22px; padding-left: 1px; margin: 0; }
.term-tabs .tab { padding: 0 9px; margin-top: 2px; }
.term-tabs .tab.cur { margin-top: -1px; padding: 0 10px; }

/* status bar */
.status { display: flex; align-items: center; height: 24px; padding: 2px 0 0 1px; position: relative; }
.status span { height: 18px; line-height: 17px; flex: 0 1 69px; border-left: 1px solid #b0b0b0; padding-left: 5px; white-space: nowrap; }
.status span:first-child { flex: 1 1 0; border: 0; padding: 0; }
.status span:nth-child(2) { flex-basis: 116px; }
.status span:nth-child(3) { flex-basis: 102px; }
.status .net { flex-basis: 147px; padding-left: 4px; }
.net svg { margin-right: 3px; vertical-align: -2px; }
.size { position: absolute; right: 0; bottom: 0; width: 14px; height: 14px; }

/* order dialog */
.dialog { position: absolute; left: 419px; top: 197px; width: 753px; height: 379px; background: #f0f0f0; border-radius: 8px; overflow: hidden; box-shadow: 0 0 0 1px #444; z-index: 5; display: flex; flex-direction: column; font-size: 12px; }
.dialog header { display: flex; align-items: center; height: 30px; background: #fff; padding-left: 8px; color: #999; flex: none; }
.dialog h2 { flex: 1; }
.dim svg { stroke: #999; }
.dim [disabled] svg { stroke: #e6e6e6; }
.dlg-body { flex: 1; display: flex; gap: 8px; padding: 13px 11px 9px 9px; }
.tickbox { width: 298px; background: #fff; border: 1px solid; border-color: #777 #e3e3e3 #e3e3e3 #777; }
.order { flex: 1; display: flex; flex-direction: column; }
.grid { display: grid; grid-template-columns: 90px 105px 1fr 105px; column-gap: 8px; row-gap: 6px; grid-auto-rows: 20px; padding-right: 7px; line-height: 19px; }
.grid label { text-align: right; white-space: nowrap; grid-column: 1; }
.grid label[for="tp"] { grid-column: 3; }
.full { grid-column: 2 / 5; }
.pick { position: relative; background: #f8f8f8; border: 1px solid #dedede; border-bottom-color: #bbb; display: flex; }
.pick select, .pick input { appearance: none; border: 0; background: none; padding: 0 2px; width: 100%; outline: 0; font-size: 11px; }
.pick input { padding: 0 5px; }
.pick .jp { font-size: 12px; }
.pick::after { content: ""; position: absolute; right: 5px; top: 4px; width: 6px; height: 6px; border: 1px solid #555; border-width: 0 1px 1px 0; transform: rotate(45deg); }
.combo { background: #fff; border-color: #777; }
.field { border: 1px solid #dedede; border-bottom-color: #888; }
.spin { display: flex; background: #fff; border: 1px solid #dedede; border-bottom-color: #888; }
.spin input { flex: 1; min-width: 0; border: 0; text-align: right; padding: 0 5px; background: none; font-size: 11px; }
.spin > span { width: 17px; display: flex; flex-direction: column; }
.spin button { flex: 1; border: 1px solid #aaa; display: grid; place-items: center; min-height: 0; background: #f0f0f0; }
.spin button::before { content: ""; border: 3px solid transparent; border-top: 0; border-bottom-color: #000; }
.spin .d::before { border-top: 3px solid #000; border-bottom: 0; }
.order fieldset { flex: 1; margin: 8px 0 0; border: 1px solid #dcdcdc; padding: 0 15px; min-width: 0; }
.order legend { padding: 0 3px; margin-left: -10px; line-height: 14px; }
.quote { text-align: center; font: 25px/36px "DejaVu Sans Condensed", "DejaVu Sans", sans-serif; padding-top: 18px; word-spacing: normal; }
.quote small { font-size: 20px; }
.pair { display: flex; gap: 25px; margin-top: 14px; }
.pair button { flex: 1; height: 21px; border: 1px solid #bbb; border-radius: 3px; line-height: 17px; }
.sell { background: #ff8080; box-shadow: inset 0 0 0 1px #fff, inset 0 0 0 2px #e87272; }
.buy { background: #a0c0ff; box-shadow: inset 0 0 0 1px #fff, inset 0 0 0 2px #8fb0f0; }
.ghost { height: 20px; margin-top: 9px; border: 1px solid #e4e4e4; border-radius: 3px; background: #f3f3f3; }
.note { text-align: center; font-size: 11px; line-height: 13px; margin-top: 14px; white-space: nowrap; }

/* context menu and annotation */
.ctx { position: absolute; left: 105px; top: 219px; width: 239px; z-index: 6; border: 1px solid #777; background: linear-gradient(90deg, #f0f0f0 27px, #fff 27px); padding: 2px 1px 1px; box-shadow: 3px 3px 3px rgba(0, 0, 0, .5); font-size: 12px; }
.ctx button { width: 100%; height: 23px; display: grid; grid-template-columns: 27px 1fr auto; column-gap: 6px; align-items: center; text-align: left; padding-right: 13px; }
.ctx button span { grid-column: 2; grid-row: 1; }
.ctx svg { width: 16px; height: 16px; margin-left: 5px; grid-row: 1; grid-column: 1; }
.ctx kbd { font: inherit; font-size: 11px; grid-row: 1; grid-column: 3; }
.ctx .hot { background: #bed6e4; }
.ctx .sub::after { content: ""; border: 3px solid transparent; border-left-color: #000; border-right: 0; margin-right: -4px; grid-row: 1; grid-column: 3; }
.rule { height: 9px; margin-left: 33px; background: linear-gradient(#e4e4e4, #e4e4e4) 0 4px / 100% 1px no-repeat; }
.mark { position: absolute; left: 106px; top: 311px; width: 238px; height: 29px; border: 5px solid #f00; z-index: 7; }
.step { position: absolute; left: 351px; top: 302px; width: 50px; height: 50px; border-radius: 50%; background: #f00; color: #fff; z-index: 7; font-size: 32px; line-height: 50px; text-align: center; }
.pointer { position: absolute; left: 271px; top: 316px; width: 13px; height: 20px; z-index: 8; }
```
FILE: script.js
```js
const NS = "http://www.w3.org/2000/svg";

function add(svg, tag, attrs, text) {
  const el = document.createElementNS(NS, tag);
  for (const k in attrs) el.setAttribute(k, attrs[k]);
  if (text !== undefined) el.textContent = text;
  svg.appendChild(el);
  return el;
}

function line(svg, x1, y1, x2, y2, stroke, dash) {
  const a = { x1, y1, x2, y2, stroke, "shape-rendering": "crispEdges" };
  if (dash) a["stroke-dasharray"] = dash;
  return add(svg, "line", a);
}

// Candle rows: x, high, body top, body bottom, low, filled
function drawChart(id, c) {
  const svg = document.getElementById(id);
  const box = svg.getBoundingClientRect();
  const W = Math.round(box.width), H = Math.round(box.height);
  svg.setAttribute("viewBox", `${c.x0} ${c.y0} ${W} ${H}`);
  const right = c.x0 + W - c.axis;
  const h = 0.5;
  for (let x = c.left + 33; x < right; x += 32) line(svg, x + h, c.top + 2, x + h, c.bottom, "#778899", "3 3");
  c.prices.forEach((p, i) => {
    const y = c.firstY + i * 33 + (c.lastShift && i === c.prices.length - 1 ? 1 : 0);
    line(svg, c.left + 1, y + h, right, y + h, "#778899", "3 3");
    line(svg, right, y + h, right + 4, y + h, "#fff");
    add(svg, "text", { x: right + 6, y: y + 4, fill: "#fff" }, p);
  });
  line(svg, c.left, c.now + h, right, c.now + h, "#778899");
  add(svg, "text", { x: c.left + 16, y: c.top + 12, fill: "#fff" }, c.title);
  add(svg, "text", { x: c.ohlcX, y: c.top + 12, fill: "#fff" }, c.ohlc);
  add(svg, "path", { d: `M${c.left + 4} ${c.top + 7}h7l-3.500 4z`, fill: "#fff" });
  const w = c.half;
  c.candles.forEach(([x, hi, t, b, lo, f]) => {
    add(svg, "rect", { x, y: hi, width: 1, height: lo - hi + 1, fill: "#00ff00" });
    add(svg, "rect", { x: x - w, y: t, width: 2 * w + 1, height: b - t + 1, fill: "#00ff00" });
    if (b - t > 1) add(svg, "rect", { x: x - w + 1, y: t + 1, width: 2 * w - 1, height: b - t - 1, fill: f ? "#fff" : "#000" });
  });
  add(svg, "rect", { x: c.x0, y: c.y0, width: c.left - c.x0, height: H, fill: "#000" });
  add(svg, "rect", { x: c.left + h, y: c.top + h, width: right - c.left, height: c.bottom - c.top, fill: "none", stroke: "#fff", "shape-rendering": "crispEdges" });
  c.times.forEach((t, i) => {
    const x = c.left + 1 + i * 64;
    line(svg, x + h, c.bottom, x + h, c.bottom + 4, "#fff");
    add(svg, "text", { x: x - 1, y: c.bottom + 12, fill: "#fff" }, t);
  });
  add(svg, "rect", { x: right + 2, y: c.now - 5, width: 41, height: 11, fill: "#fff" });
  add(svg, "text", { x: right + 6, y: c.now + 4, fill: "#000" }, c.nowText);
}

drawChart("usdjpy", {
  x0: 252, y0: 140, axis: 47, left: 254, top: 142, bottom: 656, firstY: 158, now: 180, nowText: "128.709", half: 5,
  title: "USDJPYm,Weekly", ohlc: "126.610 129.400 126.235 128.709", ohlcX: 354,
  prices: ["129.960", "128.090", "126.220", "124.350", "122.480", "120.665", "118.795", "116.925", "115.055", "113.185", "111.370", "109.500", "107.630", "105.760", "103.890", "102.075"],
  times: ["3 Jan 2021", "31 Jan 2021", "28 Feb 2021", "28 Mar 2021", "25 Apr 2021", "23 May 2021", "20 Jun 2021", "18 Jul 2021", "15 Aug 2021", "12 Sep 2021", "10 Oct 2021", "7 Nov 2021", "5 Dec 2021", "2 Jan 2022", "30 Jan 2022", "27 Feb 2022", "27 Mar 2022"],
  candles: [
    [255, 612, 618, 632, 644, 0], [271, 612, 614, 620, 628, 0], [287, 612, 620, 622, 630, 1], [303, 612, 614, 622, 626, 0],
    [351, 579, 592, 600, 601, 0], [367, 571, 575, 591, 603, 0], [383, 536, 541, 574, 576, 0], [399, 526, 528, 540, 542, 0],
    [415, 523, 528, 532, 537, 1], [1167, 405, 413, 420, 425, 0],
    [1183, 407, 413, 424, 427, 1], [1199, 410, 413, 424, 434, 0], [1215, 408, 413, 424, 429, 1],
    [1231, 377, 378, 408, 414, 0], [1247, 345, 347, 378, 381, 0], [1263, 291, 294, 347, 351, 0],
    [1279, 244, 288, 294, 313, 0], [1295, 251, 256, 288, 295, 0], [1311, 217, 217, 257, 259, 0], [1327, 167, 180, 217, 224, 0]
  ]
});

const h1 = [
  [876,877,907,912,0],[876,876,893,897,1],[890,894,906,926,1],[799,820,906,935,0],[800,820,885,889,1],[838,879,886,886,0],
  [873,879,930,934,1],[899,930,959,983,1],[950,960,992,996,1],[984,992,995,1012,1],[980,987,995,995,0],[986,988,1009,1009,1],
  [993,993,1000,1004,0],[985,994,994,1000,0],[992,993,999,1006,1],[991,999,1026,1036,1],[987,989,1025,1030,0],[966,976,989,993,0],
  [961,970,977,983,0],[967,971,980,991,1],[952,954,980,991,0],[950,954,1010,1011,1],[963,968,1010,1027,0],[966,968,971,996,1],
  [970,971,977,1002,1],[975,976,998,1006,1],[943,987,997,1000,0],[977,987,1020,1027,1],[996,1020,1023,1044,1],[941,944,1023,1030,0],
  [878,882,944,950,0],[824,855,881,881,0],[845,855,874,877,1],[842,846,873,881,0],[833,846,853,853,1],[828,837,853,853,0],
  [830,831,836,853,1],[827,836,836,843,0],[816,822,836,836,0],[809,821,848,853,1],[786,793,848,853,0],[788,793,803,805,1],
  [785,790,804,804,0],[776,778,790,801,0],[762,777,783,785,1],[749,762,783,783,0],[758,762,787,800,1],[777,788,788,801,0],
  [764,773,788,804,0],[765,773,794,805,1],[766,795,898,903,1],[834,898,944,954,1],[940,944,1142,1176,1],[1070,1123,1141,1147,0],
  [1021,1073,1124,1135,0],[985,1024,1074,1080,0],[996,1004,1025,1044,0],[987,988,1004,1013,0],[977,988,1003,1005,1],[978,999,1004,1004,0],
  [988,990,994,1000,1],[992,992,1006,1009,1],[1001,1008,1014,1033,1],[1013,1014,1045,1072,1],[1030,1037,1045,1053,0],[1033,1036,1077,1077,1],
  [1053,1058,1075,1078,0],[1052,1054,1057,1064,0],[1050,1054,1054,1057,0],[1049,1052,1058,1060,1],[1038,1039,1058,1058,0],[1008,1020,1039,1045,0],
  [1019,1021,1033,1038,1],[1025,1033,1047,1052,1],[1029,1030,1047,1057,0],[1018,1029,1035,1041,1],[1034,1036,1036,1052,0],[1035,1035,1049,1053,1],
  [1044,1050,1050,1056,0],[1044,1050,1053,1055,1],[1042,1045,1054,1054,0],[1042,1044,1046,1050,0],[1044,1044,1049,1053,1],[1034,1041,1050,1050,0],
  [1046,1047,1053,1058,0],[1011,1013,1044,1058,0],[1011,1013,1030,1034,1],[1025,1030,1063,1084,1],[1035,1048,1064,1078,0],[1042,1048,1061,1077,1],
  [1059,1061,1084,1090,1],[1075,1085,1085,1094,0],[1078,1080,1085,1095,0],[1066,1082,1082,1091,0],[1057,1083,1088,1100,1],[1080,1088,1088,1110,0],
  [1070,1086,1086,1094,0],[1063,1064,1085,1092,0],[1031,1043,1064,1064,0],[1029,1042,1053,1069,1],[1039,1053,1065,1076,1],[1054,1064,1085,1090,1],
  [1071,1085,1108,1110,1],[1101,1108,1136,1144,1],[1108,1110,1136,1140,0],[1101,1106,1110,1112,0],[1106,1107,1110,1123,1],[1107,1109,1121,1123,1],
  [1113,1115,1122,1128,1],[1097,1114,1121,1125,0],[1105,1115,1117,1130,1],[1098,1117,1120,1136,1],[1106,1121,1125,1130,1],[1123,1125,1147,1167,1],
  [1130,1137,1147,1152,0],[1113,1137,1137,1151,0],[1124,1132,1138,1152,0],[1098,1111,1133,1151,0],[1059,1061,1110,1115,0],[1029,1039,1061,1084,0],
  [1038,1039,1070,1083,1],[1071,1071,1082,1107,1],[1073,1077,1083,1105,0],[1055,1077,1082,1096,1],[1043,1051,1082,1103,0],[1050,1051,1103,1106,1],
  [1076,1094,1104,1113,0],[1071,1075,1093,1109,0],[1055,1075,1094,1095,1],[1080,1092,1094,1112,0],[1087,1091,1095,1111,1],[1087,1095,1109,1109,1],
  [1090,1092,1099,1108,0],[1085,1091,1093,1099,0],[1079,1081,1091,1100,0],[1069,1075,1081,1100,0],[1063,1075,1075,1108,0],[1042,1048,1074,1086,0],
  [1040,1048,1048,1048,0]
];

drawChart("eurusd", {
  x0: 250, y0: 722, axis: 46, left: 252, top: 724, bottom: 1189, firstY: 756, now: 1047, nowText: "1.08072", half: 2, lastShift: true,
  title: "EURUSDm,H1", ohlc: "1.08068 1.08098 1.08067 1.08072", ohlcX: 336,
  prices: ["1.09200", "1.09075", "1.08945", "1.08815", "1.08690", "1.08560", "1.08430", "1.08305", "1.08175", "1.08045", "1.07920", "1.07790", "1.07660", "1.07530"],
  times: ["12 Apr 2022", "12 Apr 17:00", "13 Apr 01:00", "13 Apr 09:00", "13 Apr 17:00", "14 Apr 01:00", "14 Apr 09:00", "14 Apr 17:00", "15 Apr 01:00", "15 Apr 09:00", "15 Apr 17:00", "18 Apr 01:00", "18 Apr 09:00", "18 Apr 17:00", "19 Apr 01:00", "19 Apr 09:00", "19 Apr 17:00", "20 Apr 01:00"],
  candles: h1.map((r, i) => [253 + 8 * i, ...r])
});

// Tick chart of the order dialog
(function () {
  const svg = document.getElementById("ticks");
  svg.setAttribute("viewBox", "429 241 296 325");
  for (let x = 464; x < 682; x += 32) line(svg, x + .5, 246, x + .5, 563, "#c8c8c8", "4 3");
  ["128.729", "128.724", "128.719", "128.713", "128.708", "128.703", "128.698", "128.692", "128.687"].forEach((p, i) => {
    const y = 274 + i * 32;
    line(svg, 432, y + .5, 681, y + .5, "#c8c8c8", "4 3");
    line(svg, 682, y + .5, 684, y + .5, "#000");
    add(svg, "text", { x: 687, y: y + 4 }, p);
  });
  add(svg, "text", { x: 687, y: 563 }, "128.682");
  const ask = "66,662 70,662 73,607 80,607 86,680 92,740 98,808 104,812 110,830 113,870 116,902 120,860 124,806 130,750 134,700 138,645 141,655 145,697 150,640 156,570 160,535 163,565 168,500 172,460 176,530 179,550 182,530 188,620 194,680 200,730 206,790 212,795 217,827 222,770 228,700 236,650 242,570 246,580 248,550 252,600 258,680 262,645 266,700 272,680 275,737 280,680 284,627 290,650 292,680 298,600 304,540 310,480 314,515 318,460 322,422 328,495 334,420 340,350 344,385 352,400 358,478 364,420 372,330 380,280 385,220 391,220 396,270 402,335 408,380 412,405 416,421 815,421";
  const bid = "66,865 72,800 76,755 80,810 86,870 92,930 98,970 100,1012 104,955 108,990 112,1045 116,1050 118,1066 122,1010 128,950 134,870 142,810 145,845 148,808 152,825 156,770 162,725 168,710 174,660 178,695 184,780 190,850 196,910 202,945 208,993 213,935 216,970 220,970 224,910 232,850 235,827 240,770 244,738 250,770 256,830 259,883 264,827 270,850 274,885 278,900 284,820 287,790 290,845 294,827 300,790 306,730 311,680 314,718 320,650 323,627 328,643 332,610 338,570 341,550 344,590 347,532 352,600 356,643 362,643 368,570 373,500 377,460 379,480 384,410 388,367 392,430 398,490 402,515 404,497 408,550 412,600 416,625 815,625";
  const path = (pts, stroke) => add(svg, "polyline", { points: pts, fill: "none", stroke, transform: "translate(410 190) scale(.33333)", "vector-effect": "non-scaling-stroke" });
  path(ask, "#ff6060");
  path(bid, "#0060ff");
  add(svg, "rect", { x: 431.5, y: 244.5, width: 250, height: 319, fill: "none", stroke: "#000" });
  [[330, "#ff6060", "128.720"], [398, "#0060ff", "128.709"]].forEach(([y, fill, t]) => {
    add(svg, "rect", { x: 683, y: y - 5, width: 41, height: 11, fill });
    add(svg, "text", { x: 687, y: y + 4, fill: "#fff" }, t);
  });
  add(svg, "text", { x: 434, y: 255 }, "USDJPYm");
})();
```
